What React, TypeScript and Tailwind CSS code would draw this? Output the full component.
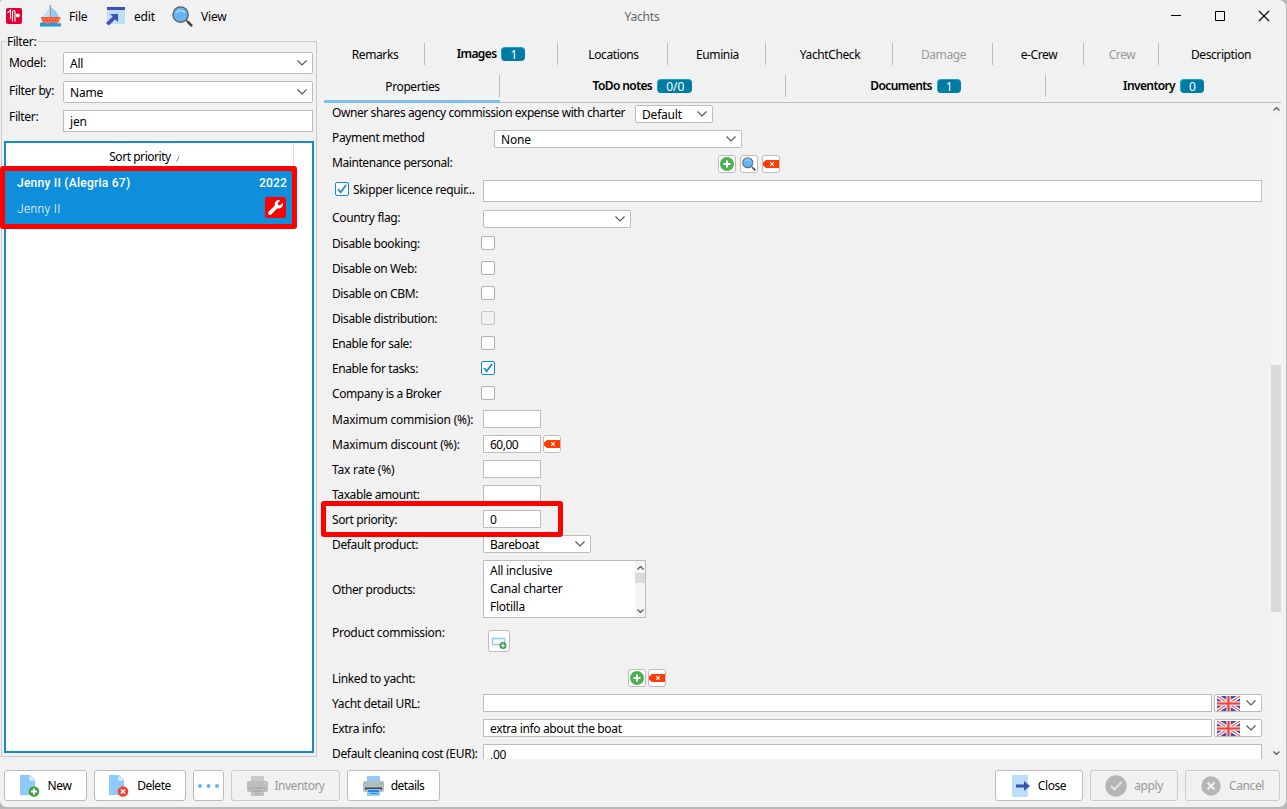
// src/App.tsx
import type { ReactNode } from "react";

function Chevron({ up = false, small = false }: { up?: boolean; small?: boolean }) {
  return (
    <svg
      width={small ? 7 : 10}
      height={small ? 4 : 6}
      viewBox={small ? "0 0 7 4" : "0 0 10 6"}
      fill="none"
      stroke="#555"
      strokeWidth={small ? 1.2 : 1.1}
      className={up ? "shrink-0 rotate-180" : "shrink-0"}
    >
      <path d={small ? "M0.5 0.5 3.5 3.5 6.5 0.5" : "M0.5 0.5 5 5 9.5 0.5"} />
    </svg>
  );
}

function AddIcon() {
  return (
    <svg width="14" height="14" viewBox="0 0 14 14">
      <circle cx="7" cy="7" r="7" fill="#4caf50" />
      <path d="M7 3.5v7M3.5 7h7" stroke="#fff" strokeWidth="2" />
    </svg>
  );
}

function ClearIcon() {
  return (
    <svg width="16" height="8" viewBox="0 0 16 8" className="shrink-0">
      <path d="M3 0h13v8H3L0 5.500v-3z" fill="#ff3d00" />
      <path d="m7.200 2.200 3.600 3.600M10.800 2.200 7.200 5.800" stroke="#fff" strokeWidth="1.100" />
    </svg>
  );
}

function SearchIcon({ size }: { size: number }) {
  return (
    <svg width={size} height={size} viewBox="0 0 22 22">
      <path d="m14 14 3 3" stroke="#616161" strokeWidth="2" />
      <path d="m16.500 16.500 4.500 4.500" stroke="#37474f" strokeWidth="2.600" />
      <circle cx="9" cy="9" r="8.700" fill="#616161" />
      <circle cx="9" cy="9" r="7.300" fill="#64b5f6" />
      <path d="M4.500 7.200c2-3.300 7-3.300 9 0" fill="none" stroke="#bbdefb" strokeWidth="1.400" />
    </svg>
  );
}

function AppLogo() {
  return (
    <svg width="16" height="16" viewBox="0 0 16 16">
      <rect width="16" height="16" rx="2" fill="#e0002f" />
      <path d="M1.500 5 4.500 2v9" fill="none" stroke="#fff" strokeWidth="1.100" />
      <path d="M6.500 13.500v-9c0-2.500 2.500-2.500 2.500-.5v9.500" fill="none" stroke="#fff" strokeWidth="1.100" />
      <circle cx="11.800" cy="7.500" r="2" fill="#fff" />
    </svg>
  );
}

function BoatIcon() {
  return (
    <svg width="21" height="22" viewBox="0 0 21 22">
      <path d="M9.500 1.500V12H2C5.500 9 8 6 9.500 1.500z" fill="#bbdefb" />
      <path d="M11 2.500c4 2 7 5.500 8 9.500h-8z" fill="#90caf9" />
      <path d="M10.300 0v13" stroke="#8d6e63" strokeWidth="0.900" />
      <path d="M1 12.500h19.500L18 19H3z" fill="#ff7043" />
      <path d="M1 12.700h19.300" stroke="#e64a19" strokeWidth="1" />
      <path d="M3 15.500h15" stroke="#bf360c" strokeWidth="1" strokeDasharray="1.500 1.500" />
      <path d="M0 18c2-1 3.500-1 5 0s3.500 1 5 0 3.500-1 5 0 3.500 1 6 0v3.500H0z" fill="#1e9ae0" />
    </svg>
  );
}

function EditIcon() {
  return (
    <svg width="19" height="19" viewBox="0 0 19 19">
      <path d="M1 0h18v17H1z" fill="#bbdefb" />
      <path d="M1 0h18v3H1z" fill="#3f51b5" />
      <path d="M4 7h8v8L9.200 12.300 2.800 18.500 0 16l6.800-6.400z" fill="#3f51b5" />
    </svg>
  );
}

function FileIcon({ kind }: { kind: "add" | "remove" }) {
  return (
    <svg width="20" height="22" viewBox="0 0 20 22">
      <path d="M0 0h10l5 5v15H0z" fill="#90caf9" />
      <path d="M9.500 0.500 14.500 5.500h-5z" fill="#e1f5fe" />
      <circle cx="14" cy="16.500" r="5.300" fill={kind === "add" ? "#43a047" : "#f44336"} />
      {kind === "add" ? (
        <path d="M14 13.500v6M11 16.500h6" stroke="#fff" strokeWidth="1.800" />
      ) : (
        <path d="m12 14.500 4 4M16 14.500l-4 4" stroke="#fff" strokeWidth="1.600" />
      )}
    </svg>
  );
}

function PrinterIcon({ disabled = false }: { disabled?: boolean }) {
  return (
    <svg width="21" height="20" viewBox="0 0 21 20">
      <path d="M4 0h13v6H4z" fill={disabled ? "#c9c9c9" : "#90caf9"} />
      <rect y="5" width="21" height="11" rx="2" fill={disabled ? "#bdbdbd" : "#b5bcc0"} />
      <path d="M2 11.500h17v2H2z" fill={disabled ? "#a8a8a8" : "#424242"} />
      <path d="M4 13h13v7H4z" fill={disabled ? "#c4c4c4" : "#90caf9"} />
      <path d="M5 14h11v2H5zM7 17h8v1H7z" fill={disabled ? "#b0b0b0" : "#1e88e5"} />
      <circle cx="18" cy="7.500" r="0.800" fill={disabled ? "#ddd" : "#00e676"} />
    </svg>
  );
}

function Flag() {
  return (
    <svg width="23" height="15" viewBox="0 0 23 15">
      <path d="M0 0h23v15H0z" fill="#3f51b5" />
      <path d="m0 0 23 15M23 0 0 15" stroke="#fff" strokeWidth="3.600" />
      <path d="m0 0 23 15M23 0 0 15" stroke="#f0625e" strokeWidth="1.200" />
      <path d="M11.500 0v15M0 7.500h23" stroke="#fbd3d3" strokeWidth="4.600" />
      <path d="M11.500 0v15M0 7.500h23" stroke="#f0443c" strokeWidth="2.200" />
    </svg>
  );
}

function Select({ value, className }: { value: string; className: string }) {
  return (
    <div
      className={`flex shrink-0 items-center justify-between rounded-[2px] border border-[#bcbcbc] bg-white pr-[5px] pl-[6px] ${className}`}
    >
      <span className="pt-px">{value}</span>
      <Chevron />
    </div>
  );
}

function Field({ value = "", className }: { value?: string; className: string }) {
  return (
    <div className={`flex shrink-0 items-center border border-[#bcbcbc] bg-white pt-px pl-[6px] ${className}`}>
      {value}
    </div>
  );
}

function Checkbox({ checked = false, disabled = false }: { checked?: boolean; disabled?: boolean }) {
  const tone = checked ? "border-[#1389d2] bg-white" : disabled ? "border-[#c4c4c4]" : "border-[#adadad] bg-white";
  return (
    <div className={`flex size-[14px] shrink-0 items-center justify-center rounded-[2px] border ${tone}`}>
      {checked && (
        <svg width="10" height="10" viewBox="0 0 10 10" fill="none" stroke="#1389d2" strokeWidth="1.700">
          <path d="M1 5 3.700 8.300 9 1" />
        </svg>
      )}
    </div>
  );
}

function IconButton({ children }: { children: ReactNode }) {
  return (
    <div className="flex size-[18px] shrink-0 items-center justify-center overflow-hidden rounded-[3px] border border-[#bcbcbc] bg-white">
      {children}
    </div>
  );
}

function Row({ label, className, children }: { label: string; className: string; children?: ReactNode }) {
  return (
    <div className={`flex shrink-0 items-start ${className}`}>
      <span className="w-[151px] shrink-0 whitespace-nowrap">{label}</span>
      {children}
    </div>
  );
}

function Badge({ children }: { children: ReactNode }) {
  return (
    <span className="ml-[5px] flex h-[14px] items-center rounded-[4px] border-t border-l border-[#16a5cf] bg-[#007ba4] px-[8px] font-normal tracking-normal text-white">
      {children}
    </span>
  );
}

type TabProps = { label: string; width: string; badge?: string; disabled?: boolean; last?: boolean };

function Tab({ label, width, badge, disabled, last }: TabProps) {
  return (
    <div
      className={`flex h-[22px] shrink-0 items-center justify-center ${width} ${last ? "" : "border-r border-[#bcbcbc]"} ${
        disabled ? "text-[#999]" : ""
      } ${badge ? "font-semibold tracking-[-0.6px]" : "pt-[2px] pl-[2px] tracking-[-0.4px]"}`}
    >
      {label}
      {badge && <Badge>{badge}</Badge>}
    </div>
  );
}

function Button({ width, disabled, children }: { width: string; disabled?: boolean; children: ReactNode }) {
  return (
    <div
      className={`flex h-[31px] shrink-0 items-center justify-center rounded-[3px] border ${width} ${
        disabled ? "border-[#cacaca] text-[#999]" : "border-[#bcbcbc] bg-white"
      }`}
    >
      {children}
    </div>
  );
}

const topTabs: TabProps[] = [
  { label: "Remarks", width: "w-[101px]" },
  { label: "Images", width: "w-[133px]", badge: "1" },
  { label: "Locations", width: "w-[110px]" },
  { label: "Euminia", width: "w-[98px]" },
  { label: "YachtCheck", width: "w-[127px]" },
  { label: "Damage", width: "w-[100px]", disabled: true },
  { label: "e-Crew", width: "w-[91px]" },
  { label: "Crew", width: "w-[75px]", disabled: true },
  { label: "Description", width: "w-[122px]", last: true },
];

const bottomTabs: TabProps[] = [
  { label: "Properties", width: "w-[176px]" },
  { label: "ToDo notes", width: "w-[286px]", badge: "0/0" },
  { label: "Documents", width: "w-[260px]", badge: "1" },
  { label: "Inventory", width: "w-[235px]", badge: "0", last: true },
];

const options = [
  { label: "Disable booking:" },
  { label: "Disable on Web:" },
  { label: "Disable on CBM:" },
  { label: "Disable distribution:", disabled: true },
  { label: "Enable for sale:" },
  { label: "Enable for tasks:", checked: true },
];

function TitleBar() {
  return (
    <header className="flex h-[36px] shrink-0 items-center">
      <div className="flex w-[560px] items-center pb-1 pl-[6px]">
        <AppLogo />
        <span className="ml-[18px] flex w-[66px] items-center gap-2">
          <BoatIcon />
          <span className="pt-[2px]">File</span>
        </span>
        <span className="flex w-[66px] items-center gap-[9px]">
          <EditIcon />
          <span className="pt-[2px]">edit</span>
        </span>
        <span className="flex items-center gap-2">
          <SearchIcon size={21} />
          <span className="pt-[2px]">View</span>
        </span>
      </div>
      <div className="w-[164px] pb-[2px] text-center text-[#666]">Yachts</div>
      <svg className="mr-[-1px] mb-1 ml-auto" width="116" height="12" viewBox="0 0 116 12" fill="none" stroke="#000">
        <path d="M0 5.500h10" />
        <path d="M44.500 1.500h9v9h-9z" />
        <path d="m88 1 10 10M98 1 88 11" strokeWidth="1.100" />
      </svg>
    </header>
  );
}

function Sidebar() {
  return (
    <aside className="relative mt-[5px] ml-px flex h-[716px] w-[316px] shrink-0 flex-col border border-[#cacaca] px-[2px]">
      <span className="absolute -top-[9px] left-[4px] bg-[#f1f1f1] px-[1px] leading-[18px] tracking-[-0.35px]">Filter:</span>
      <div className="flex flex-col pt-[10px] pl-[5px]">
        <div className="flex h-[29px]">
          <span className="w-[54px] leading-[22px] tracking-[-0.3px]">Model:</span>
          <Select value="All" className="h-[22px] w-[250px]" />
        </div>
        <div className="flex h-[29px]">
          <span className="w-[54px] leading-[19px] tracking-[-0.3px] whitespace-nowrap">Filter by:</span>
          <Select value="Name" className="h-[22px] w-[250px]" />
        </div>
        <div className="flex h-[31px]">
          <span className="w-[54px] leading-[13px] tracking-[-0.35px]">Filter:</span>
          <Field value="jen" className="h-[22px] w-[250px]" />
        </div>
      </div>
      <div className="h-[612px] w-[310px] border-2 border-[#1389d2] bg-white">
        <div className="flex h-[28px] w-[288px] items-center justify-center border-r border-[#ddd] pr-[10px] tracking-[-0.45px]">
          Sort priority
          <svg width="4" height="6" viewBox="0 0 4 6" className="mt-[3px] ml-[5px]" stroke="#888">
            <path d="M0.500 5.500 3 0.500" />
          </svg>
        </div>
        <div className="relative h-[53px] w-[287px] bg-[#0f8fdb] px-[11px] text-white">
          <div className="flex h-[24px] w-[270px] items-center justify-between font-['Roboto'] font-medium tracking-[0.25px]">
            <span>Jenny II (Alegria 67)</span>
            <span className="tracking-[0.15px]">2022</span>
          </div>
          <div className="flex h-[27px] w-[269px] items-center justify-between font-['Roboto'] font-light tracking-[0.35px]">
            <span>Jenny II</span>
            <span className="mb-[2px] flex size-[21px] items-center justify-center rounded-[2px] bg-[#f00]">
              <svg width="15" height="15" viewBox="0 0 512 512" fill="#fff">
                <path d="M507.700 109.100c-2.200-9-13.500-12.100-20.100-5.500l-74.400 74.400-67.900-11.300L334 98.900l74.400-74.400c6.600-6.600 3.400-17.900-5.700-20.200-47.400-11.700-99.600.9-136.600 37.900-39.600 39.600-50.500 97.100-34 147.200L18.700 402.800c-25 25-25 65.500 0 90.500s65.500 25 90.500 0l213.200-213.200c50.100 16.700 107.500 5.700 147.400-34.200 37.100-37.100 49.700-89.300 37.900-136.800z" />
              </svg>
            </span>
          </div>
          {/* Highlight frame */}
          <div className="absolute -top-[5px] -left-[6px] h-[63px] w-[297px] rounded-[3px] border-5 border-[#f00]" />
        </div>
      </div>
    </aside>
  );
}

function Properties() {
  return (
    <div className="-ml-[3px] flex h-[656px]">
      <div className="flex h-full w-[950px] shrink-0 flex-col overflow-hidden pt-[2px] pl-[11px]">
        <div className="flex h-[25px] shrink-0 leading-[16px]">
          <span className="w-[303px] tracking-[-0.41px] whitespace-nowrap">
            Owner shares agency commission expense with charter
          </span>
          <Select value="Default" className="h-[18px] w-[78px]" />
        </div>
        <div className="flex h-[25px] shrink-0 leading-[16px]">
          <span className="w-[162px] tracking-[-0.35px]">Payment method</span>
          <Select value="None" className="h-[18px] w-[248px]" />
        </div>
        <div className="flex h-[25px] shrink-0 gap-1 leading-[16px]">
          <span className="w-[382px] tracking-[-0.42px]">Maintenance personal:</span>
          <IconButton><AddIcon /></IconButton>
          <IconButton><SearchIcon size={14} /></IconButton>
          <IconButton><ClearIcon /></IconButton>
        </div>
        <div className="flex h-[30px] shrink-0 leading-[20px]">
          <div className="flex w-[151px] gap-1 pt-[2px] pl-[3px] whitespace-nowrap">
            <Checkbox checked />
            <span className="leading-[16px] tracking-[-0.32px]">Skipper licence requir...</span>
          </div>
          <Field className="h-[22px] w-[779px]" />
        </div>
        <Row label="Country flag:" className="h-[26px] leading-[16px] tracking-[-0.35px]">
          <Select value="" className="h-[18px] w-[148px]" />
        </Row>
        {options.map((o) => (
          <Row key={o.label} label={o.label} className="h-[25px] leading-[16px] tracking-[-0.4px]">
            <div className="-ml-[2px]">
              <Checkbox checked={o.checked} disabled={o.disabled} />
            </div>
          </Row>
        ))}
        <Row label="Company is a Broker" className="h-[24px] leading-[16px] tracking-[-0.4px]">
          <div className="-ml-[2px]">
            <Checkbox />
          </div>
        </Row>
        <Row label="Maximum commision (%):" className="h-[25px] leading-[20px]">
          <Field className="h-[18px] w-[58px]" />
        </Row>
        <Row label="Maximum discount (%):" className="h-[25px] leading-[20px]">
          <Field value="60,00" className="mr-[2px] h-[18px] w-[58px] tracking-[-0.5px]" />
          <IconButton><ClearIcon /></IconButton>
        </Row>
        <Row label="Tax rate (%)" className="h-[25px] leading-[20px]">
          <Field className="h-[18px] w-[58px]" />
        </Row>
        <Row label="Taxable amount:" className="h-[25px] leading-[20px] tracking-[-0.4px]">
          <Field className="h-[18px] w-[58px]" />
        </Row>
        <div className="relative">
          <Row label="Sort priority:" className="h-[25px] leading-[20px] tracking-[-0.4px]">
            <Field value="0" className="h-[18px] w-[58px]" />
          </Row>
          {/* Highlight frame */}
          <div className="absolute -top-[9px] -left-[11px] z-10 h-[36px] w-[242px] rounded-[3px] border-5 border-[#f00]" />
        </div>
        <Row label="Default product:" className="h-[25px] leading-[20px] tracking-[-0.35px]">
          <Select value="Bareboat" className="h-[18px] w-[108px]" />
        </Row>
        <Row label="Other products:" className="h-[70px] leading-[60px] tracking-[-0.4px]">
          <div className="flex h-[58px] w-[163px] border border-[#bcbcbc] bg-white pl-[6px] leading-[18px] tracking-[-0.25px]">
            <div className="flex-1 pt-px">
              <div>All inclusive</div>
              <div>Canal charter</div>
              <div>Flotilla</div>
            </div>
            <div className="flex w-[10px] flex-col items-center bg-[#f4f4f4] pt-[5px] pb-1">
              <Chevron up small />
              <div className="mt-[3px] mb-auto h-[10px] w-full bg-[#dadada]" />
              <Chevron small />
            </div>
          </div>
        </Row>
        <Row label="Product commission:" className="h-[39px] leading-[6px] tracking-[-0.3px]">
          <div className="ml-[5px] flex size-[22px] items-center justify-center rounded-[3px] border border-[#bcbcbc] bg-white">
            <svg width="16" height="14" viewBox="0 0 16 14" className="mt-1">
              <path d="M1.500 2.500h12v6h-12z" fill="#fff" stroke="#90caf9" strokeWidth="1.500" />
              <circle cx="12" cy="9.500" r="3.500" fill="#43a047" />
              <path d="M12 7.500v4M10 9.500h4" stroke="#fff" strokeWidth="1.200" />
            </svg>
          </div>
        </Row>
        <div className="flex h-[25px] shrink-0 gap-[2px] leading-[20px]">
          <span className="w-[294px] tracking-[-0.35px]">Linked to yacht:</span>
          <IconButton><AddIcon /></IconButton>
          <IconButton><ClearIcon /></IconButton>
        </div>
        {["Yacht detail URL:", "Extra info:"].map((label, i) => (
          <Row key={label} label={label} className="h-[25px] leading-[20px] tracking-[-0.35px]">
            <Field value={i ? "extra info about the boat" : ""} className="mr-[2px] h-[18px] w-[729px]" />
            <div className="flex h-[18px] w-[48px] items-center justify-between rounded-[2px] border border-[#bcbcbc] bg-white pr-[5px] pl-[2px]">
              <Flag />
              <Chevron />
            </div>
          </Row>
        ))}
        <Row label="Default cleaning cost (EUR):" className="h-[22px] leading-[20px] tracking-[-0.33px]">
          <Field value=",00" className="h-[20px] w-[779px]" />
        </Row>
      </div>
      <div className="flex h-full w-[10px] shrink-0 flex-col items-center bg-[#f4f4f4]">
        <div className="flex h-[12px] w-full items-center justify-center bg-[#f1f1f1]">
          <Chevron up small />
        </div>
        <div className="mt-[250px] h-[247px] w-full bg-[#dadada]" />
        <div className="mt-auto flex h-[13px] w-full items-center justify-center bg-[#f1f1f1]">
          <Chevron small />
        </div>
      </div>
    </div>
  );
}

function Footer() {
  return (
    <footer className="flex h-[31px] shrink-0 gap-[7px] pl-1">
      <Button width="w-[83px]">
        <FileIcon kind="add" />
        <span className="ml-[8px] tracking-[-0.4px]">New</span>
      </Button>
      <Button width="w-[92px]">
        <FileIcon kind="remove" />
        <span className="ml-[8px] tracking-[-0.5px]">Delete</span>
      </Button>
      <Button width="w-[31px]">
        <svg width="21" height="4" viewBox="0 0 21 4" fill="#64b5f6">
          <circle cx="2" cy="2" r="2" />
          <circle cx="10.500" cy="2" r="2" />
          <circle cx="19" cy="2" r="2" />
        </svg>
      </Button>
      <Button width="w-[109px]" disabled>
        <PrinterIcon disabled />
        <span className="ml-[7px] tracking-[-0.5px]">Inventory</span>
      </Button>
      <Button width="w-[93px]">
        <PrinterIcon />
        <span className="ml-[7px] tracking-[-0.5px]">details</span>
      </Button>
      <div className="w-[541px] shrink-0" />
      <Button width="w-[88px]">
        <svg width="18" height="22" viewBox="0 0 18 22">
          <rect width="16" height="22" rx="1" fill="#bbdefb" />
          <path d="M4 9.500h8V6l6 5-6 5v-3.500H4z" fill="#3f51b5" />
        </svg>
        <span className="ml-[8px] tracking-[-0.4px]">Close</span>
      </Button>
      <Button width="w-[88px]" disabled>
        <svg width="22" height="22" viewBox="0 0 22 22">
          <circle cx="11" cy="11" r="10.700" fill="#b5b5b5" />
          <path d="m6 11 3.500 3.500 7-7.500" fill="none" stroke="#e4e4e4" strokeWidth="2" />
        </svg>
        <span className="ml-[7px] tracking-[-0.4px]">apply</span>
      </Button>
      <Button width="w-[95px]" disabled>
        <svg width="20" height="20" viewBox="0 0 20 20">
          <circle cx="10" cy="10" r="9.700" fill="#b5b5b5" />
          <path d="m6.500 6.500 7 7M13.500 6.500l-7 7" fill="none" stroke="#f1f1f1" strokeWidth="2" />
        </svg>
        <span className="ml-[8px] tracking-[-0.4px]">Cancel</span>
      </Button>
    </footer>
  );
}

export default function App() {
  return (
    <div className="h-[809px] w-[1287px] overflow-hidden bg-[#b8b8b8] font-['Noto_Sans','Open_Sans',sans-serif] text-[12px] leading-[16px] tracking-[-0.2px] text-black">
      <div className="flex h-[807px] w-[1286px] flex-col rounded-[7px] rounded-tl-[3px] bg-[#f1f1f1]">
        <TitleBar />
        <div className="flex h-[734px] shrink-0">
          <Sidebar />
          <main className="ml-[7px] w-[957px] pt-[7px]">
            <div className="flex h-[32px]">
              {topTabs.map((tab) => (
                <Tab key={tab.label} {...tab} />
              ))}
            </div>
            <div className="relative flex h-[28px] border-b border-[#bcbcbc]">
              {bottomTabs.map((tab) => (
                <Tab key={tab.label} {...tab} />
              ))}
              <div className="absolute -bottom-px left-0 h-[3px] w-[176px] bg-[#7ec0e6]" />
            </div>
            <Properties />
          </main>
        </div>
        <Footer />
      </div>
    </div>
  );
}
